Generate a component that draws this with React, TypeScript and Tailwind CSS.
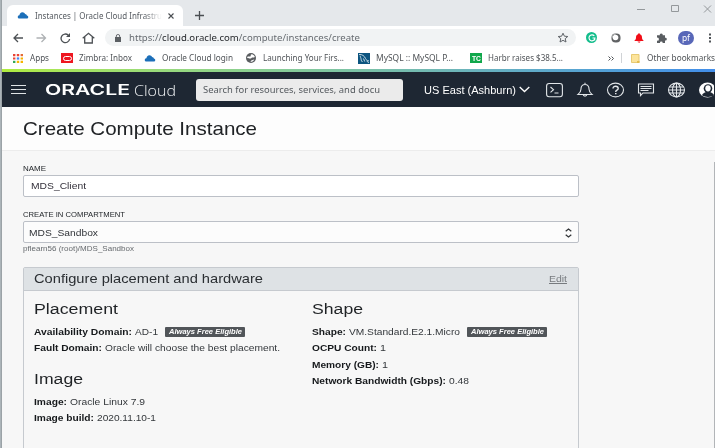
import { useLayoutEffect, useRef, useState, type ReactNode } from "react";
import clsx from "clsx";

const ARIAL = "font-['Liberation_Sans',Arial,sans-serif]";
const SEGOE = "font-['Noto_Sans','Open_Sans',sans-serif]";

/* A single line of text stretched horizontally to a given width. */
function Fit({ w, className, children }: { w: number; className?: string; children: ReactNode }) {
  const ref = useRef<HTMLSpanElement>(null);
  const [scale, setScale] = useState(1);
  useLayoutEffect(() => {
    const node = ref.current;
    if (!node) return;
    node.style.transform = "none";
    const next = w / node.getBoundingClientRect().width;
    node.style.transform = `scaleX(${next})`;
    setScale(next);
  }, [w]);
  return (
    <span className={clsx("block shrink-0 whitespace-nowrap", className)} style={{ width: w }}>
      <span ref={ref} className="inline-block origin-left" style={{ transform: `scaleX(${scale})` }}>
        {children}
      </span>
    </span>
  );
}

function CloudIcon() {
  return (
    <svg viewBox="0 0 12 8" className="h-[7px] w-3 shrink-0 fill-[#1c6fb9]">
      <path d="M2.2 7.500C.8 7.500 0 6.800 0 5.700 0 4.600.9 3.800 2 3.800 2.100 1.800 3.400.3 5.300.3c1.500 0 2.600.8 3 2 1.300.1 2 .8 2.100 1.700.9.200 1.600.8 1.600 1.700 0 1.100-.8 1.800-1.800 1.800z" />
    </svg>
  );
}

function TabStrip() {
  return (
    <div className="flex h-[26px] bg-[#e5e8eb] pl-[5px]">
      <div className="mt-[5px] flex h-[21px] w-[176px] items-center rounded-t-md bg-white pl-[10px]">
        <CloudIcon />
        <Fit w={127} className="ml-[6px] [mask-image:linear-gradient(to_right,black_86%,transparent)] text-[9px] leading-3 text-[#555a60]">
          Instances | Oracle Cloud Infrastru
        </Fit>
        <svg viewBox="0 0 6 6" className="ml-[6px] size-[6px] stroke-[#4a4e52]">
          <path d="M.5.5l5 5M5.500.5l-5 5" strokeWidth="1.1" />
        </svg>
      </div>
      <svg viewBox="0 0 9 9" className="mt-[11px] ml-[12px] size-[9px] stroke-[#4a4e52]">
        <path d="M4.500 0v9M0 4.500h9" strokeWidth="1.3" />
      </svg>
      <svg viewBox="0 0 75 10" className="mt-1 mr-[3px] ml-auto h-[10px] w-[75px] fill-none stroke-[#94989b]">
        <path d="M0 5.500h8M67 1.500l7 7M74 1.500l-7 7" />
        <path d="M34.500 1.500h7v6h-7z" />
      </svg>
    </div>
  );
}

function NavIcons() {
  return (
    <svg viewBox="0 0 84 12" className="ml-[10px] h-3 w-[84px] shrink-0 fill-none stroke-[#4d5155]" strokeWidth="1.3">
      <path d="M11 6H2M6 2L2 6l4 4" />
      <path d="M24.500 6h9M29.500 2l4 4-4 4" stroke="#aeb1b4" />
      <path d="M56.300 3.200A4.300 4.300 0 1 0 57.600 7" />
      <path d="M58 1v4h-4z" fill="#4d5155" stroke="none" />
      <path d="M70.700 6.200L76.500 1.300l5.800 4.900M72.700 5v6h7.600V5" />
    </svg>
  );
}

function Toolbar() {
  return (
    <div className="flex h-[21px] items-center bg-white pt-[2px]">
      <NavIcons />
      <div className="ml-[9px] flex h-[17px] w-[471px] items-center rounded-full bg-[#f1f3f4] pl-[10px]">
        <svg viewBox="0 0 6 8" className="h-2 w-[6px] fill-[#5b5f63]">
          <path d="M0 3h6v5H0z" />
          <path d="M1.300 3.500V2a1.700 1.500 0 0 1 3.400 0v1.500" fill="none" stroke="#5b5f63" strokeWidth=".9" />
        </svg>
        <Fit w={231} className="ml-[8px] text-[9.500px] leading-[14px] text-[#666b70]">
          https://<span className="text-[#26292c]">cloud.oracle.com</span>/compute/instances/create
        </Fit>
        <svg viewBox="0 0 12 12" className="mr-[7px] ml-auto size-3 fill-none stroke-[#5f6368]">
          <path d="M6 1.200l1.400 3 3.400.3-2.600 2.200.8 3.300L6 8.300 3 10l.8-3.300L1.200 4.500l3.400-.3z" />
        </svg>
      </div>
      <div className="ml-[10px] flex size-[11px] items-center justify-center rounded-full bg-[#14bd8c]">
        <svg viewBox="0 0 8 8" className="size-2 fill-none stroke-white">
          <path d="M6.300 1.900A3 3 0 1 0 7 4H4.500M6.700 4v2.400" strokeWidth="1.1" />
        </svg>
      </div>
      <svg viewBox="0 0 10 10" className="ml-[14px] size-[10px]">
        <rect x=".5" y=".5" width="9" height="9" rx="4" fill="#606264" />
        <circle cx="4.500" cy="4.500" r="2.800" fill="#fff" />
        <path d="M1 5a4 4 0 0 1 4-4" fill="none" stroke="#b4b6b7" strokeWidth="1" />
      </svg>
      <svg viewBox="0 0 10 10" className="ml-[13px] size-[10px] fill-[#f10d17]">
        <path d="M5 .3c.6 0 .9.400.9.9C7.500 1.600 8 2.900 8 4.500c0 1.500.5 2.200 1.500 3V8h-9v-.5C1.500 6.700 2 6 2 4.500 2 2.900 2.500 1.600 4.100 1.200c0-.500.300-.9.900-.9zM3.600 8.600h2.800C6.300 9.400 5.700 9.800 5 9.800s-1.300-.400-1.400-1.200z" />
      </svg>
      <svg viewBox="0 0 11 10" className="ml-[12px] h-[10px] w-[11px] fill-[#595d61]">
        <path d="M1 2.300h2.800a1.500 1.500 0 1 1 2.900 0H9v2.500a1.400 1.400 0 1 1 0 2.700V10H6.700a1.400 1.400 0 1 0-2.800 0H1V7.600a1.500 1.500 0 1 0 0-2.900z" />
      </svg>
      <div className="ml-[11px] flex h-[14px] w-4 items-center justify-center rounded-full bg-[#5867b8]">
        <Fit w={8} className="text-[9px] leading-[11px] text-white">pf</Fit>
      </div>
      <svg viewBox="0 0 2 10" className="ml-[15px] h-[10px] w-[2px] fill-[#505458]">
        <path d="M0 .5h2v2H0zM0 4h2v2H0zM0 7.500h2v2H0z" />
      </svg>
    </div>
  );
}

function Bookmarks() {
  const text = "text-[9px] leading-3 text-[#4f5357]";
  return (
    <div className="flex h-[22px] items-center bg-white pl-[11px]">
      <svg viewBox="0 0 10 9" className="h-[9px] w-[10px] shrink-0">
        <path d="M0 0h2.400v2.200H0zM3.800 0h2.400v2.200H3.800zM0 3.400h2.400v2.200H0z" fill="#ea4335" />
        <path d="M7.600 0H10v2.200H7.600z" fill="#e46b35" />
        <path d="M3.800 3.400h2.400v2.200H3.800z" fill="#4285f4" />
        <path d="M7.600 3.400H10v2.200H7.600zM3.800 6.800h2.400V9H3.800zM7.600 6.800H10V9H7.600z" fill="#f6b400" />
        <path d="M0 6.800h2.400V9H0z" fill="#34a853" />
      </svg>
      <Fit w={19} className={clsx("ml-[7px]", text)}>Apps</Fit>
      <div className="ml-[12px] flex h-[10px] w-[12px] shrink-0 items-center justify-center bg-[#ee1620]">
        <div className="h-[5px] w-[9px] rounded-full border-[1.5px] border-white" />
      </div>
      <Fit w={53} className={clsx("ml-[6px]", text)}>Zimbra: Inbox</Fit>
      <div className="ml-[12px] flex"><CloudIcon /></div>
      <Fit w={71} className={clsx("ml-[6px]", text)}>Oracle Cloud login</Fit>
      <svg viewBox="0 0 10 10" className="ml-[13px] size-[10px] shrink-0">
        <circle cx="5" cy="5" r="5" fill="#5a5d60" />
        <path d="M1 4.200C2 3 3.500 3.800 4.300 3.400 5.300 2.900 4 1.800 5.500 1.200 7.500 1.200 8.500 2.800 8.900 4 7.500 5 6 4 5.500 5c-.4.700-1.500.6-2.200.4S1.600 5.500 1 4.200zM4.500 8.800c.3-1 .5-1.300 1.500-1.600.8-.3 1.500-.700 2.300-.7C7.500 8 6 9 4.500 8.800z" fill="#fff" />
      </svg>
      <Fit w={81} className={clsx("ml-[7px]", text)}>Launching Your Firs...</Fit>
      <div className="ml-[14px] flex h-[11px] w-[12px] shrink-0 bg-[#0d5580]">
        <svg viewBox="0 0 12 11" className="h-[11px] w-[12px] fill-none stroke-[#d6e6ee]">
          <path d="M1 1.500c3-.5 5.500 1.500 6.500 4 .6 1.600 1.500 2 3.500 2.500M2.200 2.800c.2 1.700.8 2 .9 3.500.1 1.200.5 2 1.400 2.700M5.500 5.500l1.200 3M8.800 8l2 2" strokeWidth=".9" />
        </svg>
      </div>
      <Fit w={77} className={clsx("ml-[6px]", text)}>MySQL :: MySQL P...</Fit>
      <div className="ml-[17px] flex h-[10px] w-[12px] shrink-0 items-center justify-center bg-[#10a74b]">
        <Fit w={9} className="font-['Liberation_Sans',Arial,sans-serif] text-[7px] leading-[9px] font-bold text-white">TC</Fit>
      </div>
      <Fit w={75} className={clsx("ml-[6px]", text)}>Harbr raises $38.5...</Fit>
      <svg viewBox="0 0 6 5" className="ml-[45px] h-[5px] w-[6px] shrink-0 fill-none stroke-[#505458]">
        <path d="M.5.5l2 2-2 2M3.500.5l2 2-2 2" />
      </svg>
      <div className="ml-[7px] h-[10px] w-px shrink-0 bg-[#d0d3d6]" />
      <svg viewBox="0 0 9 9" className="ml-[9px] size-[9px] shrink-0">
        <path d="M.5.5h7.500v8H.5z" fill="#fce49b" stroke="#e8ca73" />
        <path d="M6 7h2.500v2H6z" fill="#e4bd4f" />
      </svg>
      <Fit w={68} className={clsx("ml-[7px]", text)}>Other bookmarks</Fit>
    </div>
  );
}

function HeaderIcons() {
  return (
    <svg viewBox="0 0 168 18" className="h-[18px] w-[168px] shrink-0 fill-none stroke-[#e2e6e9]" strokeWidth="1.100">
      <rect x=".6" y="2.500" width="15.800" height="13.200" rx="2.500" />
      <path d="M4.500 6l3 2.700-3 2.700M8.500 12h4" />
      <path d="M32 13.500c1.800-1.500 2.800-2.300 2.900-5C35 5.300 36.600 3.500 39 3.500s4 1.800 4.100 5c.1 2.700 1.100 3.500 2.900 5zM39 3.500V1.800M37.200 13.800c.1 1.700 3.500 1.700 3.600 0" />
      <ellipse cx="69.500" cy="9" rx="8" ry="6.900" />
      <path d="M67 7.400c0-3 5.200-2.800 5.200 0 0 1.800-2.500 1.700-2.500 3.500" strokeWidth="1.400" />
      <path d="M69 12h1.500v1.300H69z" fill="#e2e6e9" stroke="none" />
      <path d="M92.500 3h15v9h-10.500l-2.500 2.700V12h-2zM94.500 5.500h11M94.500 7.500h11M94.500 9.500h8" />
      <ellipse cx="130.500" cy="9" rx="8" ry="6.900" />
      <ellipse cx="130.500" cy="9" rx="4" ry="6.900" />
      <path d="M130.500 2v14M123.500 6h14M122.500 9h16M123.500 12h14" />
      <ellipse cx="161.500" cy="9" rx="8.500" ry="7.500" fill="#fff" stroke="none" />
      <ellipse cx="162" cy="7.500" rx="4.300" ry="4.300" fill="#1e2733" stroke="none" />
      <path d="M156 14.300c.5-2 2.500-2.600 4-3.300h4c1.500.7 3.500 1.300 4 3.300-3 2.300-9 2.300-12 0z" fill="#1e2733" stroke="none" />
      <ellipse cx="162" cy="7.300" rx="2.700" ry="3.100" fill="#fff" stroke="none" />
    </svg>
  );
}

function CloudHeader() {
  return (
    <header className="flex h-[35px] items-center overflow-hidden bg-[#1e2733]">
      <div className="ml-[9px] flex w-[15px] shrink-0 flex-col gap-[3px]">
        <div className="h-px bg-[#dfe3e6]" />
        <div className="h-px bg-[#dfe3e6]" />
        <div className="h-px bg-[#dfe3e6]" />
      </div>
      <Fit w={85} className="ml-[19px] font-['Inter',sans-serif] text-[14.500px] leading-[18px] font-semibold text-white">ORACLE</Fit>
      <Fit w={42} className="ml-[4px] font-['Open_Sans','Noto_Sans',sans-serif] text-[15px] leading-[18px] font-light text-[#f1f3f5]">Cloud</Fit>
      <div className="ml-[20px] flex h-[22px] w-[207px] shrink-0 items-center rounded-[3px] bg-[#ebebeb] pl-[7px]">
        <Fit w={177} className="text-[9.500px] leading-[14px] text-[#54595e]">
          Search for resources, services, and docu
        </Fit>
      </div>
      <Fit w={92} className="ml-[21px] font-['Liberation_Sans',Arial,sans-serif] text-[10.500px] leading-[14px] text-white">US East (Ashburn)</Fit>
      <svg viewBox="0 0 11 7" className="ml-[3px] h-[7px] w-[11px] shrink-0 fill-none stroke-white">
        <path d="M.7 1l4.800 4.500L10.300 1" strokeWidth="1.300" />
      </svg>
      <div className="ml-[16px] flex shrink-0"><HeaderIcons /></div>
    </header>
  );
}

function Row({ label, labelWidth, value, valueWidth, badge }: {
  label: string; labelWidth: number; value: string; valueWidth: number; badge?: boolean;
}) {
  return (
    <div className="flex h-[16.300px] items-center text-[9px] leading-3 text-[#33373b]">
      <Fit w={labelWidth} className="font-bold text-[#16191c]">{label}</Fit>
      <Fit w={valueWidth} className="ml-[3px]">{value}</Fit>
      {badge && (
        <span className="ml-[7px] flex h-[10px] w-[80px] shrink-0 items-center justify-center rounded-[1px] bg-[#515559]">
          <Fit w={73} className="text-[7.500px] leading-[10px] font-bold text-white italic">Always Free Eligible</Fit>
        </span>
      )}
    </div>
  );
}

function Heading({ w, children }: { w: number; children: string }) {
  return <Fit w={w} className="text-[15.500px] leading-[18px] text-[#1f2225]">{children}</Fit>;
}

function Panel() {
  return (
    <section className="mt-[13px] h-[200px] w-[556px] rounded-t-[2px] border border-[#c6cacf] bg-[#f7f7f7]">
      <div className="flex h-[23px] items-center justify-between border-b border-[#c6cacf] bg-[#dee2e5] pr-[11px] pl-[10px]">
        <Fit w={229} className="text-[13px] leading-4 text-[#2a2e32]">Configure placement and hardware</Fit>
        <Fit w={18} className="text-[9.500px] leading-3 text-[#777b7f]"><span className="underline">Edit</span></Fit>
      </div>
      <div className="flex pt-[9px] pl-[10px]">
        <div className="w-[278px]">
          <Heading w={84}>Placement</Heading>
          <div className="pt-[6px]">
            <Row label="Availability Domain:" labelWidth={98} value="AD-1" valueWidth={23} badge />
            <Row label="Fault Domain:" labelWidth={68} value="Oracle will choose the best placement." valueWidth={175} />
          </div>
          <div className="mt-[13px]"><Heading w={49}>Image</Heading></div>
          <div className="pt-[6px]">
            <Row label="Image:" labelWidth={33} value="Oracle Linux 7.9" valueWidth={75} />
            <Row label="Image build:" labelWidth={60} value="2020.11.10-1" valueWidth={59} />
          </div>
        </div>
        <div>
          <Heading w={51}>Shape</Heading>
          <div className="pt-[6px]">
            <Row label="Shape:" labelWidth={34} value="VM.Standard.E2.1.Micro" valueWidth={111} badge />
            <Row label="OCPU Count:" labelWidth={65} value="1" valueWidth={6} />
            <Row label="Memory (GB):" labelWidth={67} value="1" valueWidth={6} />
            <Row label="Network Bandwidth (Gbps):" labelWidth={134} value="0.48" valueWidth={20} />
          </div>
        </div>
      </div>
    </section>
  );
}

export default function App() {
  return (
    <div className={clsx("flex h-[448px] w-[715px] overflow-hidden bg-[#f7f7f7]", SEGOE)}>
      <div className="w-[2px] shrink-0 bg-linear-to-r from-[#b4bdc2] to-[#939a9e]" />
      <div className="flex min-w-0 flex-1 flex-col">
        <TabStrip />
        <Toolbar />
        <Bookmarks />
        <div className="h-[3px] shrink-0 bg-linear-to-r from-[#b0ec3e] via-[#72b9b3] via-60% to-[#428eea]" />
        <CloudHeader />
        <div className={clsx("flex h-[44px] shrink-0 items-center border-b border-[#ececec] bg-[#fdfdfd] pl-[21px]", ARIAL)}>
          <Fit w={234} className="text-[18.500px] leading-[22px] text-[#202326]">Create Compute Instance</Fit>
        </div>
        <div className="flex min-h-0 flex-1">
          <main className={clsx("flex-1 pt-[12px] pl-[21px]", ARIAL)}>
            <Fit w={23} className="text-[8px] leading-[11px] text-[#22262a]">NAME</Fit>
            <div className="mt-[1px] flex h-[22px] w-[556px] items-center rounded-[2px] border border-[#bcc0c7] bg-white pl-[7px]">
              <Fit w={55} className="text-[9.500px] leading-3 text-[#33303a]">MDS_Client</Fit>
            </div>
            <Fit w={102} className="mt-[12px] text-[8px] leading-[11px] text-[#22262a]">CREATE IN COMPARTMENT</Fit>
            <div className="mt-[1px] flex h-[22px] w-[556px] items-center justify-between rounded-[2px] border border-[#bcc0c7] bg-[#fcfcfc] pr-[6px] pl-[5px]">
              <Fit w={69} className="pt-px text-[9.500px] leading-3 text-[#303338]">MDS_Sandbox</Fit>
              <svg viewBox="0 0 7 10" className="mt-px h-[10px] w-[7px] fill-none stroke-[#303336]">
                <path d="M.7 3.300L3.500 1l2.800 2.300M.7 6.700L3.500 9l2.800-2.300" strokeWidth="1.200" />
              </svg>
            </div>
            <Fit w={111} className="pt-px text-[7.500px] leading-[10px] text-[#666a6e]">pflearn56 (root)/MDS_Sandbox</Fit>
            <Panel />
          </main>
          <div className="mt-[11px] w-px bg-[#b2b5b8]" />
        </div>
      </div>
    </div>
  );
}
